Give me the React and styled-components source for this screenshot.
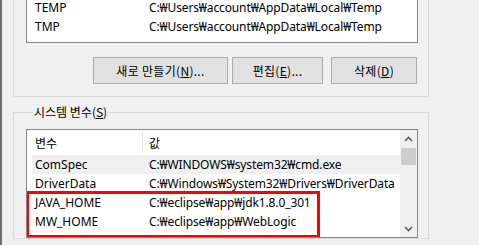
import React from 'react';
import styled, { createGlobalStyle } from 'styled-components';

const GlobalStyle = createGlobalStyle`
    html, body {
        margin: 0;
        padding: 0;
        background: #f0f0f0;
        overflow: hidden;
    }
    body {
        font-family: 'Noto Sans', 'Noto Sans CJK KR', sans-serif;
        font-size: 12px;
        color: #000;
    }
`;

const Window = styled.div`
    width: 479px;
    height: 245px;
    box-sizing: border-box;
    border-left: 2px solid #6e6e6e;
    padding-left: 11px;
    overflow: hidden;
`;

const Group = styled.fieldset`
    width: 416px;
    box-sizing: border-box;
    margin: ${props => (props.first ? '0' : '8px 0 0')};
    padding: ${props => (props.first ? '0 10px 12px 12px' : '10px 10px 0 12px')};
    border: 1px solid #dcdcdc;
    border-top: ${props => (props.first ? 'none' : '1px solid #dcdcdc')};
    min-width: 0;
`;

const Legend = styled.legend`
    padding: 0 1px;
    margin-left: 7px;
    line-height: 14px;
    font-family: 'Noto Sans CJK KR', sans-serif;
    font-size: 12px;
`;

const Key = styled.span`
    text-decoration: underline;
    text-underline-offset: 1px;
`;

const ListBox = styled.div`
    position: relative;
    width: 392px;
    box-sizing: border-box;
    border: 1px solid #828790;
    border-top: ${props => (props.cut ? 'none' : '1px solid #828790')};
    background: #fff;
    height: ${props => props.height}px;
    overflow: hidden;
    display: flex;
`;

const Rows = styled.div`
    flex: 1;
    min-width: 0;
    display: flex;
    flex-direction: column;
    margin-top: ${props => props.offset || 0}px;
`;

const Row = styled.div`
    height: 19px;
    flex-shrink: 0;
    display: flex;
    align-items: center;
    margin-left: 5px;
    background: ${props => (props.selected ? '#f0f0f0' : 'transparent')};
    white-space: nowrap;
`;

const Header = styled.div`
    height: 25px;
    flex-shrink: 0;
    display: flex;
    align-items: center;
    font-family: 'Noto Sans CJK KR', sans-serif;
    white-space: nowrap;
`;

const NameCell = styled.div`
    width: ${props => (props.header ? 116 : 111)}px;
    padding-left: ${props => (props.header ? 8 : 3)}px;
    box-sizing: border-box;
    flex-shrink: 0;
    align-self: stretch;
    display: flex;
    align-items: center;
    border-right: ${props => (props.header ? '1px solid #e5e5e5' : 'none')};
    margin: ${props => (props.header ? '2px 0' : '0')};
`;

const ValueCell = styled.div`
    padding-left: 6px;
    letter-spacing: -0.12px;
    font-family: 'Noto Sans', 'Noto Sans CJK KR', sans-serif;
`;

const ScrollBar = styled.div`
    width: 17px;
    flex-shrink: 0;
    background: #f0f0f0;
    display: flex;
    flex-direction: column;
    align-items: center;
`;

const Arrow = styled.div`
    height: 17px;
    width: 17px;
    display: flex;
    align-items: center;
    justify-content: center;
    margin-top: ${props => (props.down ? 'auto' : '0')};
`;

const Thumb = styled.div`
    width: 15px;
    height: 17px;
    background: #cdcdcd;
    margin-top: 1px;
`;

const ButtonRow = styled.div`
    display: flex;
    justify-content: flex-end;
    margin-top: 14px;
    padding-right: 1px;
`;

const Button = styled.button`
    width: ${props => props.w}px;
    height: 27px;
    margin-left: ${props => props.gap || 0}px;
    background: #e1e1e1;
    border: 1px solid #adadad;
    font-family: 'Noto Sans CJK KR', sans-serif;
    font-size: 12px;
    color: #000;
    padding: 0;
    letter-spacing: 0.3px;
`;

const Highlight = styled.div`
    position: absolute;
    left: -1px;
    top: 61px;
    width: 294px;
    height: 47px;
    box-sizing: border-box;
    border: 3px solid #f00;
    pointer-events: none;
`;

const Chevron = ({ down }) => (
    <svg width="9" height="6" viewBox="0 0 9 6">
        <path
            d={down ? 'M1 1 L4.5 4.5 L8 1' : 'M1 5 L4.5 1.5 L8 5'}
            fill="none"
            stroke="#606060"
            strokeWidth="1.6"
        />
    </svg>
);

const userVars = [
    ['TEMP', 'C:₩Users₩account₩AppData₩Local₩Temp'],
    ['TMP', 'C:₩Users₩account₩AppData₩Local₩Temp'],
];

const systemVars = [
    ['ComSpec', 'C:₩WINDOWS₩system32₩cmd.exe', true],
    ['DriverData', 'C:₩Windows₩System32₩Drivers₩DriverData'],
    ['JAVA_HOME', 'C:₩eclipse₩app₩jdk1.8.0_301'],
    ['MW_HOME', 'C:₩eclipse₩app₩WebLogic'],
    ['', ''],
];

const App = () => (
    <Window>
        <GlobalStyle />
        <Group first>
            <ListBox cut height={43}>
                <Rows offset={-2}>
                    {userVars.map(([name, value]) => (
                        <Row key={name}>
                            <NameCell>{name}</NameCell>
                            <ValueCell>{value}</ValueCell>
                        </Row>
                    ))}
                </Rows>
            </ListBox>
            <ButtonRow>
                <Button w={135}>
                    새로 만들기(<Key>N</Key>)...
                </Button>
                <Button w={91} gap={4}>
                    편집(<Key>E</Key>)...
                </Button>
                <Button w={86} gap={8}>
                    삭제(<Key>D</Key>)
                </Button>
            </ButtonRow>
        </Group>
        <Group>
            <Legend>
                시스템 변수(<Key>S</Key>)
            </Legend>
            <ListBox height={109}>
                <Rows>
                    <Header>
                        <NameCell header>변수</NameCell>
                        <ValueCell>값</ValueCell>
                    </Header>
                    {systemVars.map(([name, value, selected], i) => (
                        <Row key={i} selected={selected}>
                            <NameCell>{name}</NameCell>
                            <ValueCell>{value}</ValueCell>
                        </Row>
                    ))}
                </Rows>
                <ScrollBar>
                    <Arrow>
                        <Chevron />
                    </Arrow>
                    <Thumb />
                    <Arrow down>
                        <Chevron down />
                    </Arrow>
                </ScrollBar>
                <Highlight />
            </ListBox>
        </Group>
    </Window>
);

export default App;
